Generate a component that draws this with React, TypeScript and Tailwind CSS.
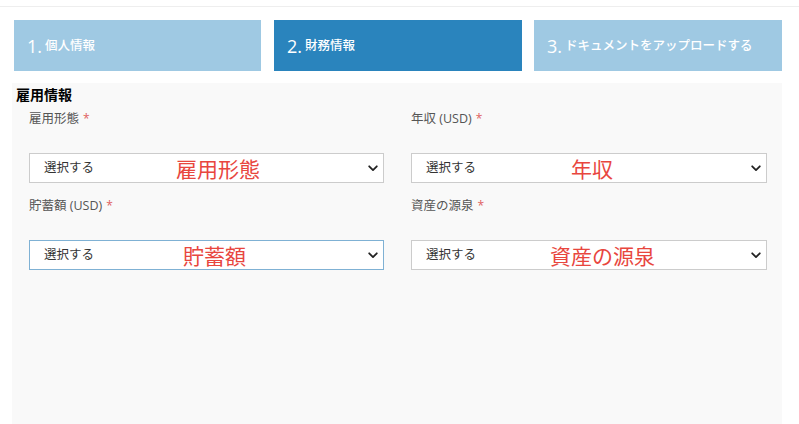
import React from "react";

const font = { fontFamily: '"Open Sans", "Noto Sans CJK JP", sans-serif' };

function Chevron() {
  return (
    <svg width="10" height="7" viewBox="0 0 10 7" className="shrink-0">
      <path d="M1.2 1.3 L5 5.1 L8.8 1.3" fill="none" stroke="#222" strokeWidth="1.8" strokeLinecap="round" strokeLinejoin="round" />
    </svg>
  );
}

function Field({
  label,
  overlay,
  offset,
  focused,
}: {
  label: string;
  overlay: string;
  offset: string;
  focused?: boolean;
}) {
  return (
    <div className="flex flex-col">
      <div className="h-[20px] flex items-center text-[12.5px] text-[#555]">
        <span>{label}</span>
        <span className="ml-[4px] text-[#e06060] text-[12px]">*</span>
      </div>
      <div
        className={`relative mt-[24px] h-[30px] bg-white border flex items-center pl-[14px] pr-[5px] ${
          focused ? "border-[#7fb1d4]" : "border-[#cccccc]"
        }`}
      >
        <span className="text-[12.5px] text-[#333] flex-1">選択する</span>
        <Chevron />
        <span className={`absolute top-[3px] text-[21px] leading-[25px] text-[#e8463e] ${offset}`}>{overlay}</span>
      </div>
    </div>
  );
}

export default function App() {
  return (
    <div className="w-[799px] h-[424px] bg-white overflow-hidden flex flex-col" style={font}>
      <div className="mt-[6px] h-px bg-[#eeeeee]" />
      <div className="mt-[13px] flex pl-[14px]">
        <div className="w-[247px] h-[51px] bg-[#9fc9e3] flex items-center pl-[13px] pt-[1px] text-white">
          <span className="text-[18px] leading-none font-medium">1.</span>
          <span className="ml-[3px] text-[12.5px] leading-none font-medium">個人情報</span>
        </div>
        <div className="ml-[13px] w-[248px] h-[51px] bg-[#2a84bd] flex items-center pl-[13px] pt-[1px] text-white">
          <span className="text-[18px] leading-none font-medium">2.</span>
          <span className="ml-[3px] text-[12.5px] leading-none font-medium">財務情報</span>
        </div>
        <div className="ml-[12px] w-[248px] h-[51px] bg-[#9fc9e3] flex items-center pl-[13px] pt-[1px] text-white">
          <span className="text-[18px] leading-none font-medium">3.</span>
          <span className="ml-[3px] text-[12.5px] leading-none font-medium">ドキュメントをアップロードする</span>
        </div>
      </div>
      <div className="mt-[12px] ml-[12px] w-[770px] flex-1 bg-[#f9f9f9] flex flex-col">
        <div className="pl-[4px] pt-[1px] h-[21px] flex items-center text-[14px] font-bold text-black">雇用情報</div>
        <div className="mt-[5px] pl-[17px] pr-[15px] grid grid-cols-[355px_356px] gap-x-[27px] gap-y-[13px]">
          <Field label="雇用形態" overlay="雇用形態" offset="left-[146px]" />
          <Field label="年収 (USD)" overlay="年収" offset="left-[159px]" />
          <Field label="貯蓄額 (USD)" overlay="貯蓄額" offset="left-[153px]" focused />
          <Field label="資産の源泉" overlay="資産の源泉" offset="left-[138px]" />
        </div>
      </div>
    </div>
  );
}
